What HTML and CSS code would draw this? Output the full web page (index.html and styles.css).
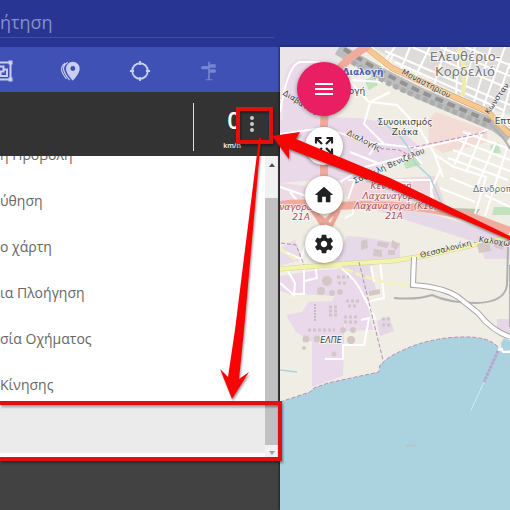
FILE: index.html
```html
<!DOCTYPE html>
<html lang="el">

<head>
    <meta charset="UTF-8">
    <meta name="viewport" content="width=device-width, initial-scale=1.0">
    <title>Map</title>
    <link rel="stylesheet" href="styles.css">
</head>

<body>
    <div class="app">
        <header class="header">
            <input type="search" class="search" placeholder="ήτηση" aria-label="Αναζήτηση">
        </header>

        <aside class="sidebar">
            <nav class="tabs">
                <button class="tab" aria-label="Group">
                    <svg viewBox="0 0 24 24" width="24" height="24" fill="none" stroke="currentColor" stroke-width="2">
                        <path d="M4 3.500h16M4 20.500h16M3.500 4v16M20.500 4v16" />
                        <path d="M7.500 7.500h6v5h-6zM13.500 10.500h3.500v6.500h-6.500v-4" />
                        <path d="M1.500 1.500h4v4h-4zM18.500 1.500h4v4h-4zM1.500 18.500h4v4h-4zM18.500 18.500h4v4h-4z" fill="currentColor" stroke="none" />
                    </svg>
                </button>
                <button class="tab" aria-label="Places">
                    <svg viewBox="0 0 24 24" width="22" height="22" fill="currentColor">
                        <path fill-rule="evenodd" d="M14 2a7.500 7.500 0 0 0-7.500 7.500C6.500 15 14 22.500 14 22.500S21.500 15 21.500 9.500A7.500 7.500 0 0 0 14 2zm0 10a2.700 2.700 0 1 1 0-5.400 2.700 2.700 0 0 1 0 5.400z" />
                        <path d="M8.500 2.500C1.500 7 2.500 12 10.500 22M5.500 3.500C-.5 8 1 13 7 20.500" fill="none" stroke="currentColor" stroke-width="1.300" />
                    </svg>
                </button>
                <button class="tab" aria-label="Locate">
                    <svg viewBox="0 0 24 24" width="22" height="22" fill="none" stroke="currentColor" stroke-width="2">
                        <circle cx="12" cy="12" r="8.500" />
                        <path d="M12 1v4.500M12 18.500V23M1 12h4.500M18.500 12H23" />
                    </svg>
                </button>
                <button class="tab tab-off" aria-label="Directions" disabled>
                    <svg viewBox="0 0 24 24" width="20" height="20" fill="currentColor">
                        <path d="M11 1h2v3h7v4h-7v2h6l2 2-2 2h-6v8h3v1H8v-1h3V10H4L2 8l2-2h7z" />
                    </svg>
                </button>
            </nav>

            <div class="speed-bar">
                <div class="speed">
                    <span class="speed-value">0</span>
                    <span class="speed-unit">km/h</span>
                </div>
                <button class="more" aria-label="More">
                    <svg viewBox="0 0 6 18" width="6" height="18" fill="currentColor">
                        <circle cx="3" cy="3" r="2" />
                        <circle cx="3" cy="9" r="2" />
                        <circle cx="3" cy="15" r="2" />
                    </svg>
                </button>
            </div>

            <div class="menu">
                <ul class="menu-list">
                    <li><button>η Προβολή</button></li>
                    <li><button>ύθηση</button></li>
                    <li><button>ο χάρτη</button></li>
                    <li><button>ια Πλοήγηση</button></li>
                    <li><button>σία Οχήματος</button></li>
                    <li><button>Κίνησης</button></li>
                    <li><button class="active" aria-label="Επιλογή"></button></li>
                </ul>
                <div class="scrollbar" aria-hidden="true">
                    <span class="scroll-up"></span>
                    <span class="scroll-thumb"></span>
                    <span class="scroll-down"></span>
                </div>
            </div>
        </aside>

        <main class="map">
            <svg class="map-canvas" viewBox="280 47 230 463" preserveAspectRatio="xMinYMin slice">
                <rect x="280" y="47" width="230" height="463" fill="#f0ede5" />

                <!-- land use -->
                <path d="M280 47h78l-28 30-8 40-42 8z" fill="#ebe4e8" />
                <path d="M372 47h138v68l-25-8-45-22z" fill="#dddcda" />
                <path d="M285 75q5-17 22-16l15 5-2 53 40 1q35 5 52 22l15 14-24 3-48 24-75-2z" fill="#e9d9e9" />
                <path d="M280 120l35 12v48l-35 3z" fill="#e9d9e9" />
                <path d="M428 120l8-8 50 18 2 12-45 11-14-10z" fill="#f2dcd5" />
                <path d="M342 181l93-5 10 28-95 5z" fill="#efd8dd" />
                <path d="M280 183l28 3-2 15-26 6z" fill="#ecdbe6" />
                <path d="M375 210l50 2 85 25v22h-25l-7-16z" fill="#e6d9e7" />
                <path d="M335 263l12-27 15 1 38 6v17l-28 5 4 26-24 10z" fill="#e7dae8" />
                <path d="M280 276l40-6 28-1 15 14 10 47-28 1v-8h-1v21l-1 32-31 11v-45l-16-10-10-17 16-3 8-12-30-9z" fill="#ead9ea" />
                <path d="M280 248l15-8 8 19-23 7z" fill="#e9dcea" />
                <path d="M377 321l12-5 5 15-14 5zM497 319h13v14h-13z" fill="#e5d7e5" />
                <path d="M285 300l15-6 34 2-2 5-30 1-15 11z" fill="#f0ede0" />

                <!-- greens -->
                <g fill="#c1e2bf">
                    <path d="M364 80l10-4 4 9-9 5zM403 161l14-4 6 7-17 5z" />
                    <path d="M490 146l8-4 3 11h-9zM494 207h16v8h-18z" />
                </g>
                <path d="M426 207l54 2-3 5-50-2z" fill="#b9c5ad" />

                <!-- streets -->
                <g class="street">
                    <path d="M395 47l-9 12M410 47l-10 24M430 47l-15 30M446 47l-12 38M459 47l-3 48M475 47l-13 50M491 47l-17 55M505 47l-23 63M510 63l-17 48M510 88l-8 30" />
                    <path d="M385 51l125 54M395 62l108 48M412 47l98 42M440 47l70 29M465 47l45 18" />
                    <path d="M280 112q8-48 20-50h20M345 76l25 27-6 21 20 20M371 102l26 3 22 23 15 25 9 24M348 80l35 2 10-28M372 47l12 22M390 92l-20 10" />
                    <path d="M280 134l43-6 50 15 35 4 14 17M350 152l35 14M375 147l-6 8M340 182l25-15 46-12M408 147l14 1 55-13 12-7M434 154l20 13 32 10-12 40" />
                    <path d="M463 132l47 17M458 140l52 20M453 150l57 21M448 158l60 22M470 132l-16 33M482 134l-16 38M496 142l-18 42M508 145l-23 71M440 170l-9 20 4 17" />
                    <path d="M348 180h83v24M280 187l35 12M290 192l15 18M345 218l8-4v-10M356 176l-8 23M280 283l14 12 1-12-9-15M294 294h10M304 265v30M315 264l2 14-12 3" />
                    <path d="M361 320l8-2-5 27h-21v14h-18M340 267q17 13 23 28l13 25M380 261l4 37-14 3M371 266l3 16M285 252l18 8M305 245l-5 18M450 178l30 12M440 188l35 14M490 185l20 8M485 195l25 12" />
                </g>

                <!-- streams -->
                <path d="M280 370l17 2M377 120q30 15 38 43l15 14 13 30 17 9 40 10" fill="none" stroke="#a9d5d8" stroke-width="1.500" />

                <!-- railway -->
                <path d="M338 49q42 25 83 45l75 32 14 11" fill="none" stroke="#bcbcbc" stroke-width="12" />
                <path d="M344 49q37 24 77 43l75 32" fill="none" stroke="#929292" stroke-width="4" stroke-dasharray="8 5" />
                <path d="M352 62q30 20 69 36l65 27" fill="none" stroke="#acacac" stroke-width="5" stroke-dasharray="5 3" />
                <path d="M394 298q23 2 38-3 17 8 45 8 28-1 30-18l1-38M510 265v62M490 124q15 14 20 25" fill="none" stroke="#b0b0b0" stroke-width="2" />

                <!-- main roads -->
                <g fill="none">
                    <path d="M459 47l6 23-2 26" stroke="#f0edab" stroke-width="4" />
                    <path d="M364 46l28 22 56 26 40 18 12 13 10 10" stroke="#cf9c6c" stroke-width="6" />
                    <path d="M364 46l28 22 56 26 40 18 12 13 10 10" stroke="#f8c88f" stroke-width="5" />
                    <path d="M368 46q-34 19-42 47l-2 32v65M280 205q30-4 44 3 32-6 100 0l45 8 41 15" stroke="#f0ab9d" stroke-width="8" />
                    <path d="M304 203q9 6 18 22 9-10 23-22M312 210l19 16 8-16" stroke="#eba698" stroke-width="4" />
                    <path d="M280 269l60-5 52-3 32-5 45-10 41-9" stroke="#d3d594" stroke-width="5" />
                    <path d="M280 269l60-5 52-3 32-5 45-10 41-9" stroke="#f3f3ac" stroke-width="4" />
                    <path d="M280 249l20 13M335 265l27 11 23 6 28 4" stroke="#f4f1bb" stroke-width="3" stroke-dasharray="8 3" />
                    <path d="M414 257l-1 28q30 2 45 12l20 16q14 18 32 24" stroke="#a5a5a5" stroke-width="6" />
                    <path d="M414 257l-1 28q30 2 45 12l20 16q14 18 32 24" stroke="#fff" stroke-width="4" />
                </g>

                <!-- buildings and tanks -->
                <g fill="#d5c7c6">
                    <path d="M361 241l6-2 1 9-7 2zM378 241l11 2-2 5-10-2zM392 240l8 4-4 6-5-3zM374 249l8 1v7l-9-1zM388 250h7v5h-7zM369 291l11-2v5l-11 2zM477 244l12-3 2 10-12 2zM493 238l12 4-2 8-9-3z" />
                    <circle cx="327" cy="281" r="5" />
                    <circle cx="321" cy="291" r="4" />
                    <circle cx="332" cy="293" r="3" />
                    <circle cx="340" cy="292" r="3" />
                    <circle cx="306" cy="339" r="3.500" />
                    <circle cx="317" cy="339" r="3.500" />
                    <circle cx="343" cy="330" r="3" />
                    <circle cx="353" cy="330" r="3" />
                    <circle cx="351" cy="340" r="4" />
                    <circle cx="334" cy="354" r="2.500" />
                    <circle cx="304" cy="348" r="2" />
                </g>
                <path d="M308 330h27M329 307h10M329 311h10M329 315h10M337 277h12M338 283h9M344 317h14M344 322h14M346 301h14M348 306h10M382 319h8M382 325h8" fill="none" stroke="#d3c4c8" stroke-width="3" stroke-dasharray="3 2" />
                <path d="M315 304v18" stroke="#c8b8c2" stroke-width="2" stroke-dasharray="2 1" />

                <!-- sea -->
                <path d="M280 402l30-10 4-4 14-5 51-11 1-7 8-7q33-20 73-21 28-1 37 10l1 4 11 2v157H280z" fill="#aad3df" />
                <path d="M501 343l3-5 6 3v9l-8 1z" fill="#aad3df" />
                <g fill="none" stroke="#b98bb9" stroke-width="1" stroke-dasharray="4 2">
                    <path d="M280 402l30-10 4-4 14-5 51-11 1-7 8-7q33-20 73-21 28-1 37 10" />
                    <path d="M359 262l24 98M281 243l15 2 8 20M374 148l25 2 12 6M410 148l77-16" />
                </g>
                <path d="M498 351l-14 31" stroke="#b9a4cc" stroke-width="3" stroke-dasharray="3 1" />
                <path d="M484 382l-13 28" stroke="#d9e9ef" stroke-width="1" />
                <path d="M498 350l4-1 1 3h7" fill="none" stroke="#fff" stroke-width="2" />
                <path d="M406 446l9-1" stroke="#b5c6c4" stroke-width="2" />

                <!-- labels -->
                <g class="label label-town">
                    <text x="465" y="61">Ελευθέριο-</text>
                    <text x="465" y="76">Κορδελιό</text>
                </g>
                <g class="label">
                    <text x="405" y="125">Συνοικισμός</text>
                    <text x="405" y="135">Ζιάκα</text>
                    <text x="357" y="94">ογή</text>
                    <text x="503" y="124">Επτ</text>
                    <text x="492" y="192" class="label-grey">Δενδροπ</text>
                    <text x="331" y="343" class="label-italic">ΕΛΠΕ</text>
                </g>
                <text x="363" y="75" class="label label-station">Διαλογή</text>
                <g class="label label-road">
                    <text x="299" y="105" transform="rotate(33 299 105)">Διαβατών</text>
                    <text x="363" y="143" transform="rotate(27 363 143)">Διαλογής</text>
                    <text x="390" y="168" transform="rotate(-24 390 168)">Σοφοκλή Βενιζέλου</text>
                    <text x="425" y="86" transform="rotate(27 425 86)">Μοναστηρίου</text>
                    <text x="499" y="100" transform="rotate(-55 499 100)">Κωνσταν</text>
                    <text x="449" y="251" transform="rotate(-14 449 251)">Θεσσαλονίκη -</text>
                    <text x="494" y="244" transform="rotate(8 494 244)">Καλοχώ</text>
                </g>
                <g class="label label-red">
                    <text x="391" y="189">Κεντρική</text>
                    <text x="391" y="199">Λαχαναγορά</text>
                    <text x="396" y="209">Λαχαναγορά (Κ16)</text>
                    <text x="394" y="219">21Α</text>
                    <text x="296" y="210">ναγορά</text>
                    <text x="301" y="220">21Α</text>
                </g>
            </svg>

            <div class="map-tools">
                <button class="tool tool-main" aria-label="Menu">
                    <svg viewBox="0 0 24 24" width="24" height="24" fill="currentColor">
                        <path d="M3 18h18v-2H3v2zm0-5h18v-2H3v2zm0-7v2h18V6H3z" />
                    </svg>
                </button>
                <button class="tool" aria-label="Fullscreen">
                    <svg viewBox="0 0 24 24" width="24" height="24" fill="none" stroke="currentColor" stroke-width="2.200">
                        <path d="M9.500 4H4v5.500M14.500 4H20v5.500M9.500 20H4v-5.500M14.500 20H20v-5.500M4 4l6 6M20 4l-6 6M4 20l6-6M20 20l-6-6" />
                    </svg>
                </button>
                <button class="tool" aria-label="Home">
                    <svg viewBox="0 0 24 24" width="22" height="22" fill="currentColor">
                        <path d="M10 20v-6h4v6h5v-8h3L12 3 2 12h3v8z" />
                    </svg>
                </button>
                <button class="tool" aria-label="Settings">
                    <svg viewBox="0 0 24 24" width="22" height="22" fill="currentColor">
                        <path d="M19.430 12.980c.04-.32.07-.64.07-.98s-.03-.66-.07-.98l2.110-1.650c.19-.15.24-.42.12-.64l-2-3.460c-.12-.22-.39-.3-.61-.22l-2.490 1c-.52-.4-1.080-.73-1.690-.98l-.38-2.650C14.460 2.180 14.250 2 14 2h-4c-.25 0-.46.18-.49.42l-.38 2.650c-.61.25-1.170.59-1.690.98l-2.490-1c-.23-.09-.49 0-.61.22l-2 3.460c-.13.22-.07.49.12.64l2.110 1.650c-.04.32-.07.65-.07.98s.03.66.07.98l-2.110 1.650c-.19.15-.24.42-.12.64l2 3.460c.12.22.39.3.61.22l2.490-1c.52.4 1.080.73 1.690.98l.38 2.650c.03.24.24.42.49.42h4c.25 0 .46-.18.49-.42l.38-2.650c.61-.25 1.170-.59 1.690-.98l2.490 1c.23.09.49 0 .61-.22l2-3.460c.12-.22.07-.49-.12-.64l-2.110-1.650zM12 15.500c-1.930 0-3.500-1.570-3.500-3.500s1.570-3.500 3.500-3.500 3.500 1.570 3.500 3.500-1.570 3.500-3.500 3.500z" />
                    </svg>
                </button>
            </div>
        </main>

        <!-- callout boxes and arrows -->
        <svg class="callouts" viewBox="0 0 510 510" preserveAspectRatio="xMinYMin slice" aria-hidden="true">
            <rect x="238" y="109" width="33" height="33" />
            <rect x="-10" y="403" width="290" height="56" />
            <path d="M259 138h2l-17 192-5 49 10-7-17 27-12-30 8 8 7-47z" />
            <path d="M272 136l28-4-4 7 94 39 120 58v4l-120-52-101-39v10z" />
        </svg>
    </div>
</body>

</html>
```

FILE: styles.css
```css
* {
    box-sizing: border-box;
}

body {
    margin: 0;
    font-family: "Open Sans", sans-serif;
    background: #424242;
    overflow: hidden;
}

button {
    border: none;
    padding: 0;
    font: inherit;
    color: inherit;
    background: none;
    cursor: pointer;
}

.app {
    position: relative;
    display: grid;
    grid-template-columns: 280px 1fr;
    grid-template-rows: 47px 1fr;
    height: 100vh;
}

/* Header */
.header {
    grid-column: 1 / -1;
    background: #283593;
}

.search {
    display: block;
    width: 274px;
    height: 38px;
    padding: 6px 0 0;
    border: none;
    border-bottom: 1px solid #4450a3;
    outline: none;
    background: none;
    color: #fff;
    font: inherit;
    font-size: 18px;
}

.search::placeholder {
    color: #8790ca;
    opacity: 1;
}

/* Sidebar */
.sidebar {
    display: flex;
    flex-direction: column;
    min-width: 0;
    overflow: hidden;
    background: #424242;
}

.tabs {
    display: flex;
    height: 45px;
    padding-top: 2px;
    background: #3f51b5;
    flex-shrink: 0;
}

.tab {
    flex: 0 0 69px;
    display: flex;
    align-items: center;
    justify-content: center;
    color: #c9cff0;
}

.tab:first-child {
    margin-left: -33px;
}

.tab-off {
    color: #7784d0;
}

.speed-bar {
    display: flex;
    justify-content: flex-end;
    align-items: center;
    height: 64px;
    padding-top: 6px;
    flex-shrink: 0;
    background: #333;
    color: #fff;
}

.speed {
    display: flex;
    flex-direction: column;
    align-items: flex-end;
    justify-content: space-between;
    width: 48px;
    height: 48px;
    margin-right: -2px;
    border-left: 1px solid #ddd;
    font-family: "Liberation Sans Narrow", "Open Sans", sans-serif;
    font-weight: 600;
}

.speed-value {
    font-size: 24px;
    line-height: 34px;
}

.speed-unit {
    font-size: 7px;
    line-height: 10px;
}

.more {
    display: flex;
    align-items: center;
    justify-content: center;
    width: 32px;
    height: 32px;
    margin: 0 9px 6px 0;
    background: #333;
    color: #ccc;
}

.more svg {
    margin-right: 6px;
}

.menu {
    display: flex;
    height: 302px;
    margin-right: 2px;
    flex-shrink: 0;
    overflow: hidden;
    background: #fff;
}

.menu-list {
    flex: 1;
    margin: -25px 0 0;
    padding: 0;
    list-style: none;
}

.menu-list button {
    display: block;
    width: 100%;
    height: 46px;
    text-align: left;
    font-size: 14px;
    color: #666;
}

.menu-list .active {
    background: #ebebeb;
}

.scrollbar {
    display: flex;
    flex-direction: column;
    align-items: center;
    justify-content: space-between;
    width: 13px;
    padding: 7px 0 3px;
    background: #f1f1f1;
}

.scroll-up,
.scroll-down {
    border: 3px solid transparent;
}

.scroll-up {
    border-top: none;
    border-bottom: 4px solid #505050;
}

.scroll-down {
    border-bottom: none;
    border-top: 4px solid #a0a0a0;
}

.scroll-thumb {
    width: 100%;
    flex: 1;
    margin: 31px 0 6px;
    background: #c1c1c1;
}

/* Map */
.map {
    position: relative;
    min-width: 0;
    overflow: hidden;
    background: #aad3df;
    box-shadow: -1px 0 2px rgba(0, 0, 0, 0.5);
}

.map-canvas {
    display: block;
    width: 100%;
    height: 100%;
}

.street {
    fill: none;
    stroke: #fff;
    stroke-width: 2;
}

.label {
    font-family: "DejaVu Sans", sans-serif;
    font-size: 9px;
    fill: #444;
    text-anchor: middle;
    paint-order: stroke;
    stroke: rgba(255, 255, 255, 0.6);
    stroke-width: 2px;
}

.label-town {
    font-size: 13px;
    fill: #777;
}

.label-grey {
    fill: #777;
}

.label-italic {
    font-style: italic;
    font-size: 8px;
}

.label-station {
    font-weight: bold;
    fill: #4a5fb5;
}

.label-road {
    font-size: 8px;
    stroke-width: 1px;
}

.label-red {
    font-style: italic;
    fill: #a94e5d;
}

.map-tools {
    position: absolute;
    top: 15px;
    left: 17px;
    display: flex;
    flex-direction: column;
    align-items: center;
    gap: 11px;
}

.tool {
    display: flex;
    align-items: center;
    justify-content: center;
    width: 38px;
    height: 38px;
    border-radius: 50%;
    background: #fff;
    color: #212121;
    box-shadow: 0 1px 4px rgba(0, 0, 0, 0.4);
}

.tool-main {
    width: 54px;
    height: 54px;
    background: #e91e63;
    color: #fff;
}

/* Callouts drawn over the page */
.callouts {
    position: absolute;
    inset: 0;
    width: 100%;
    height: 100%;
    pointer-events: none;
    filter: drop-shadow(1px 2px 1px rgba(0, 0, 0, 0.4));
}

.callouts rect {
    fill: none;
    stroke: #e01010;
    stroke-width: 4;
}

.callouts path {
    fill: #f80404;
}
```
